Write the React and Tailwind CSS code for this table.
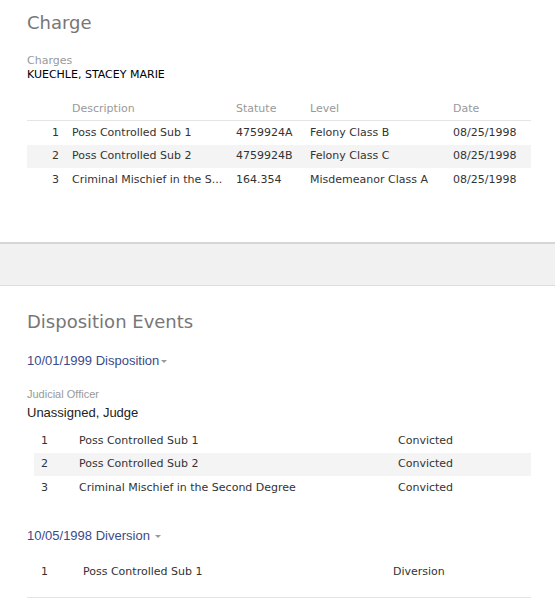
import React from "react";

const V = { fontFamily: '"DejaVu Sans", Verdana, sans-serif' };
const A = { fontFamily: '"Liberation Sans", Arial, sans-serif' };

const charges = [
  ["1", "Poss Controlled Sub 1", "4759924A", "Felony Class B", "08/25/1998"],
  ["2", "Poss Controlled Sub 2", "4759924B", "Felony Class C", "08/25/1998"],
  ["3", "Criminal Mischief in the S...", "164.354", "Misdemeanor Class A", "08/25/1998"],
];

const dispo = [
  ["1", "Poss Controlled Sub 1", "Convicted"],
  ["2", "Poss Controlled Sub 2", "Convicted"],
  ["3", "Criminal Mischief in the Second Degree", "Convicted"],
];

function Caret() {
  return <span className="inline-block ml-[2px] align-middle border-x-[3px] border-x-transparent border-t-[3px] border-t-[#999]" />;
}

export default function App() {
  return (
    <div className="w-[555px] h-[600px] bg-white overflow-hidden text-[#333]" style={V}>
      <div className="px-[27px] pt-[11px] h-[242px]">
        <h1 className="text-[18px] leading-[24px] text-[#777]">Charge</h1>
        <div className="mt-[19px] text-[11px] leading-[14px] text-[#999]">Charges</div>
        <div className="text-[11px] leading-[14px] text-black">KUECHLE, STACEY MARIE</div>
        <div className="mt-[16px] w-[504px] text-[11px]">
          <div className="flex h-[23px] items-center border-b border-[#e5e5e5] text-[#999]">
            <div className="w-[45px]" />
            <div className="w-[164px]">Description</div>
            <div className="w-[74px]">Statute</div>
            <div className="w-[143px]">Level</div>
            <div>Date</div>
          </div>
          {charges.map((r, i) => (
            <div key={i} className={`flex h-[23.5px] items-center ${i === 1 ? "bg-[#f4f4f4]" : ""}`}>
              <div className="w-[32px] text-right">{r[0]}</div>
              <div className="w-[13px]" />
              <div className="w-[164px]">{r[1]}</div>
              <div className="w-[74px]">{r[2]}</div>
              <div className="w-[143px]">{r[3]}</div>
              <div>{r[4]}</div>
            </div>
          ))}
        </div>
      </div>
      <div className="h-[44px] bg-[#f1f1f1] border-t-2 border-t-[#d6d6d6] border-b border-b-[#dcdcdc]" />
      <div className="px-[27px] pt-[24px]">
        <h2 className="text-[18px] leading-[24px] text-[#777]">Disposition Events</h2>
        <div className="mt-[18px] text-[13px] leading-[18px] text-[#3b4a8a]" style={A}>
          10/01/1999 Disposition<Caret />
        </div>
        <div className="mt-[18px] text-[11px] leading-[12px] text-[#999]" style={A}>Judicial Officer</div>
        <div className="mt-[4px] text-[13px] leading-[17px] text-[#222]" style={A}>Unassigned, Judge</div>
        <div className="mt-[8px] ml-[7px] w-[497px] text-[11px]">
          {dispo.map((r, i) => (
            <div key={i} className={`flex h-[23.5px] items-center ${i === 1 ? "bg-[#f4f4f4]" : ""}`}>
              <div className="w-[45px] pl-[7px]">{r[0]}</div>
              <div className="w-[319px]">{r[1]}</div>
              <div>{r[2]}</div>
            </div>
          ))}
        </div>
        <div className="mt-[27px] text-[13px] leading-[18px] text-[#3b4a8a]" style={A}>
          10/05/1998 Diversion <Caret />
        </div>
        <div className="mt-[16px] ml-[7px] w-[497px] text-[11px]">
          <div className="flex h-[23px] items-center">
            <div className="w-[49px] pl-[7px]">1</div>
            <div className="w-[310px]">Poss Controlled Sub 1</div>
            <div>Diversion</div>
          </div>
        </div>
        <div className="mt-[13px] w-[504px] border-b border-[#e5e5e5]" />
      </div>
    </div>
  );
}
